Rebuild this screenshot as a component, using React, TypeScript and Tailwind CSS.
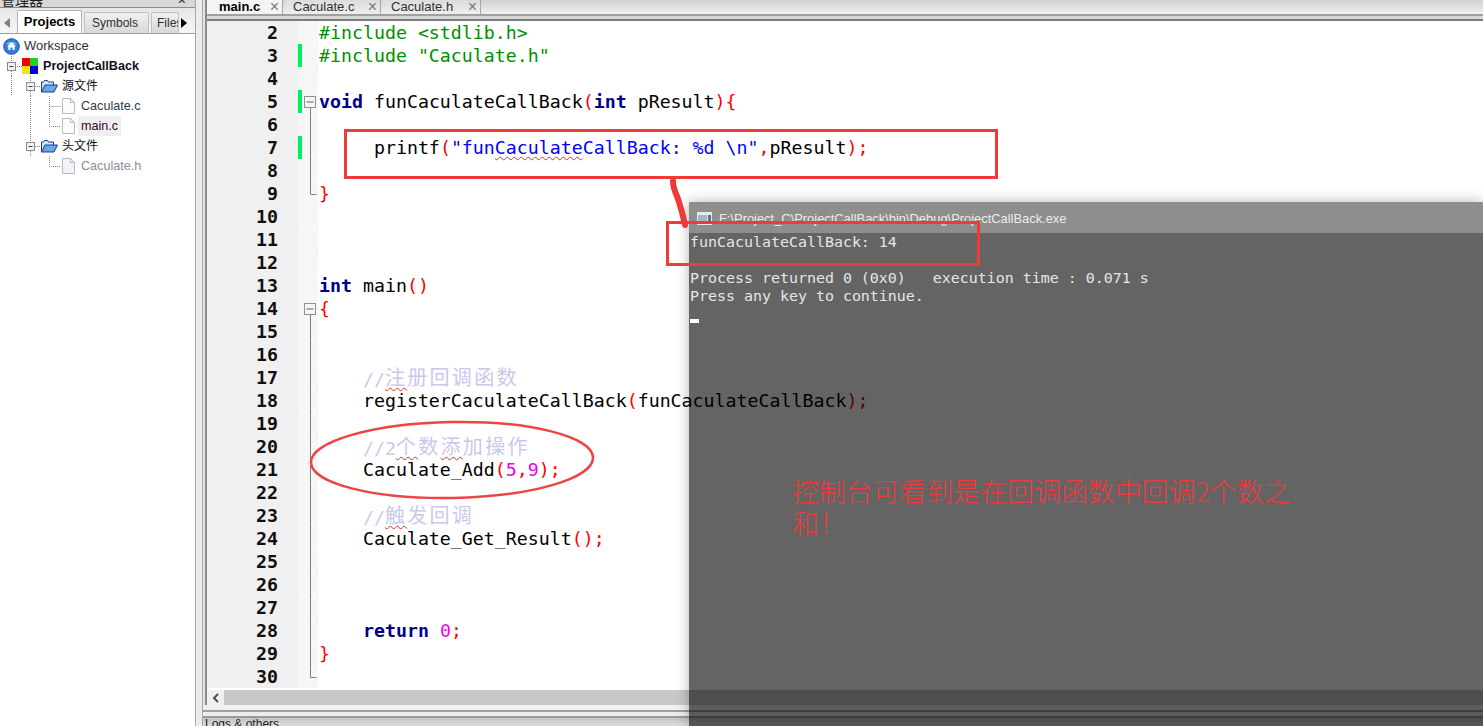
import type { ReactNode } from "react";

const mono = "font-['DejaVu_Sans_Mono','Liberation_Mono',monospace]";

function Op({ children }: { children: ReactNode }) {
  return <span className="text-[#ff0000]">{children}</span>;
}

function Kw({ children }: { children: ReactNode }) {
  return <span className="text-[#00008b] font-bold">{children}</span>;
}

function Num({ children }: { children: ReactNode }) {
  return <span className="text-[#f000f0]">{children}</span>;
}

function Squiggle({ children }: { children: ReactNode }) {
  return <span className="underline decoration-wavy decoration-[#e03030] decoration-1 underline-offset-2">{children}</span>;
}

// comments hold double width CJK, so the han text gets its own size and spacing
function Comment({ children }: { children: ReactNode }) {
  return <span className="text-[#c9c9ec]">{children}</span>;
}

function Han({ children }: { children: ReactNode }) {
  return <span className="relative -top-px font-['Noto_Sans_CJK_SC',sans-serif] text-[20px] tracking-[2.3px]">{children}</span>;
}

type Fold = "open" | "line" | "end" | null;

const code: { n: number; bar?: boolean; fold?: Fold; body?: ReactNode }[] = [
  { n: 2, body: <span className="text-[#009000]">{"#include <stdlib.h>"}</span> },
  { n: 3, bar: true, body: <span className="text-[#009000]">{'#include "Caculate.h"'}</span> },
  { n: 4 },
  { n: 5, bar: true, fold: "open", body: <><Kw>void</Kw> funCaculateCallBack<Op>(</Op><Kw>int</Kw> pResult<Op>{"){"}</Op></> },
  { n: 6, fold: "line" },
  {
    n: 7,
    bar: true,
    fold: "line",
    body: (
      <>
        {"     printf"}<Op>(</Op>
        <span className="text-[#0000ff]">{'"fun'}<Squiggle>Caculate</Squiggle>{'CallBack: %d \\n"'}</span>
        <Op>,</Op>pResult<Op>);</Op>
      </>
    ),
  },
  { n: 8, fold: "line" },
  { n: 9, fold: "end", body: <Op>{"}"}</Op> },
  { n: 10 },
  { n: 11 },
  { n: 12 },
  { n: 13, body: <><Kw>int</Kw> main<Op>()</Op></> },
  { n: 14, fold: "open", body: <Op>{"{"}</Op> },
  { n: 15, fold: "line" },
  { n: 16, fold: "line" },
  { n: 17, fold: "line", body: <>{"    "}<Comment>//<Han><Squiggle>注</Squiggle>册回调函数</Han></Comment></> },
  { n: 18, fold: "line", body: <>{"    registerCaculateCallBack"}<Op>(</Op>funCaculateCallBack<Op>);</Op></> },
  { n: 19, fold: "line" },
  { n: 20, fold: "line", body: <>{"    "}<Comment>//2<Han><Squiggle>个</Squiggle>数<Squiggle>添</Squiggle>加操作</Han></Comment></> },
  { n: 21, fold: "line", body: <>{"    Caculate_Add"}<Op>(</Op><Num>5</Num><Op>,</Op><Num>9</Num><Op>);</Op></> },
  { n: 22, fold: "line" },
  { n: 23, fold: "line", body: <>{"    "}<Comment>//<Han><Squiggle>触</Squiggle>发回调</Han></Comment></> },
  { n: 24, fold: "line", body: <>{"    Caculate_Get_Result"}<Op>();</Op></> },
  { n: 25, fold: "line" },
  { n: 26, fold: "line" },
  { n: 27, fold: "line" },
  { n: 28, fold: "line", body: <>{"    "}<Kw>return</Kw> <Num>0</Num><Op>;</Op></> },
  { n: 29, fold: "line", body: <Op>{"}"}</Op> },
  { n: 30, fold: "end" },
];

function FoldMark({ fold }: { fold?: Fold }) {
  if (!fold) return null;
  return (
    <svg width="20" height="23" className="block">
      {fold === "open" && (
        <>
          <rect x="6.5" y="6.5" width="11" height="11" fill="#f4f4f4" stroke="#909090" />
          <path d="M8.5 12h7" stroke="#606060" />
          <path d="M12.5 18v5" stroke="#808080" />
        </>
      )}
      {fold === "line" && <path d="M12.5 0v23" stroke="#808080" />}
      {fold === "end" && <path d="M12.5 0v12.5h6" fill="none" stroke="#808080" />}
    </svg>
  );
}

function Globe() {
  return (
    <svg width="17" height="17" viewBox="0 0 17 17" className="shrink-0">
      <circle cx="8.5" cy="8.5" r="7.8" fill="#2f7fd8" stroke="#1b4f9c" />
      <path d="M3 6a7 5 0 0 1 11 0z" fill="#8cc4f4" />
      <path d="M8.5 4 13 8.5h-1.4V12H9.6V9.5H7.4V12H5.4V8.5H4z" fill="#fff" />
    </svg>
  );
}

function ProjectIcon() {
  return (
    <svg width="16" height="16" viewBox="0 0 16 16" className="shrink-0">
      <rect x="0" y="0" width="8" height="8" fill="#f00000" />
      <rect x="8" y="0" width="8" height="8" fill="#20d020" />
      <rect x="0" y="8" width="8" height="8" fill="#f0e800" />
      <rect x="8" y="8" width="8" height="8" fill="#0000e0" />
    </svg>
  );
}

function FolderIcon() {
  return (
    <svg width="17" height="13" viewBox="0 0 17 13" className="shrink-0">
      <path d="M.5 12V2h2l1-1.5h3L7.5 2h5v3" fill="#cfe4fa" stroke="#16408c" />
      <path d="M.5 12 4 5h12.5L13 12z" fill="#6aa6ea" stroke="#16408c" />
    </svg>
  );
}

function FileIcon({ faded }: { faded?: boolean }) {
  return (
    <svg width="13" height="16" viewBox="0 0 13 16" className="shrink-0">
      <path d="M.5.5h8l4 4v11H.5z" fill={faded ? "#f2f2f8" : "#fbfbfd"} stroke="#b8bac8" />
      <path d="M8.5.5v4h4" fill="none" stroke="#b8bac8" />
    </svg>
  );
}

// dotted connector lines for one row of the project tree
function Guide({ w, children }: { w: number; children: ReactNode }) {
  return (
    <svg width={w} height="20" className="shrink-0" stroke="#808080" strokeDasharray="1 1" fill="none">
      {children}
    </svg>
  );
}

function Minus({ x }: { x: number }) {
  return (
    <g strokeDasharray="none">
      <rect x={x - 3.5} y="6.5" width="8" height="8" fill="#eef0f2" stroke="#8c8c8c" />
      <path d={`M${x - 1.5} 10.5h4`} stroke="#404040" />
    </g>
  );
}

function Tree() {
  return (
    <div className="pt-[2px] font-['Liberation_Sans','Noto_Sans_CJK_SC',sans-serif] text-[12.6px] text-[#10101c]">
      <div className="flex h-5 items-center pl-[3px] gap-[4px]">
        <Globe />
        <span className="text-[13px] text-[#303040]">Workspace</span>
      </div>
      <div className="flex h-5 items-center">
        <Guide w={22}>
          <path d="M11.5 0v6M15 10.5h7M11.5 15v5" />
          <Minus x={11} />
        </Guide>
        <ProjectIcon />
        <span className="ml-[5px] font-bold">ProjectCallBack</span>
      </div>
      <div className="flex h-5 items-center">
        <Guide w={41}>
          <path d="M11.5 0v20M30.5 0v6M35 10.5h6M30.5 15v5" />
          <Minus x={30} />
        </Guide>
        <FolderIcon />
        <span className="ml-1 text-[12px]">源文件</span>
      </div>
      <div className="flex h-5 items-center">
        <Guide w={62}>
          <path d="M30.5 0v20M49.5 0v20M49.5 10.5h11" />
        </Guide>
        <FileIcon />
        <span className="ml-[6px] text-[#303848]">Caculate.c</span>
      </div>
      <div className="flex h-5 items-center">
        <Guide w={62}>
          <path d="M30.5 0v20M49.5 0v10.5h11" />
        </Guide>
        <FileIcon />
        <span className="ml-[3px] bg-[#efefef] px-[3px] h-5 leading-5 text-[#400030]">main.c</span>
      </div>
      <div className="flex h-5 items-center">
        <Guide w={41}>
          <path d="M30.5 0v6M35 10.5h6M30.5 15v5" />
          <Minus x={30} />
        </Guide>
        <FolderIcon />
        <span className="ml-1 text-[12px]">头文件</span>
      </div>
      <div className="flex h-5 items-center">
        <Guide w={62}>
          <path d="M49.5 0v10.5h11" />
        </Guide>
        <FileIcon faded />
        <span className="ml-[6px] text-[#8a8e98]">Caculate.h</span>
      </div>
    </div>
  );
}

function Sidebar() {
  return (
    <div className="flex w-[195px] shrink-0 flex-col overflow-hidden bg-white font-['Liberation_Sans',sans-serif]">
      <div className="flex h-[8px] items-end justify-between overflow-hidden border-b border-[#8c8c8c] bg-[#d8d8d8] px-[1px] text-[14px] leading-[8px] text-[#202020]">
        <span className="font-['Noto_Sans_CJK_SC',sans-serif] -translate-y-[3px]">管理器</span>
        <span className="mr-[8px] -translate-y-[3px]">×</span>
      </div>
      <div className="flex h-[26px] items-end border-b border-[#a0a0a0] bg-gradient-to-b from-[#e6e6e6] to-[#f6f6f6] pl-[4px] text-[12px]">
        <span className="mb-[5px] mr-[7px] h-0 w-0 border-y-[5px] border-r-[6px] border-y-transparent border-r-[#808080]" />
        <div className="flex h-[23px] w-[65px] items-center justify-center rounded-t-[2px] border border-b-0 border-[#b4b4b4] bg-white text-[13px] font-bold text-black">Projects</div>
        <div className="ml-[2px] flex h-[21px] w-[65px] items-center justify-center rounded-t-[2px] border border-b-0 border-[#c0c0c0] bg-gradient-to-b from-[#f0f0f0] to-[#d8d8d8] pr-[3px] text-[#303030]">Symbols</div>
        <div className="ml-[2px] flex h-[21px] w-[28px] items-center overflow-hidden rounded-t-[2px] border border-b-0 border-[#c0c0c0] bg-gradient-to-b from-[#f0f0f0] to-[#d8d8d8] pl-[5px] text-[#303030]">Files</div>
        <span className="mb-[5px] ml-[2px] h-0 w-0 border-y-[5px] border-l-[6px] border-y-transparent border-l-black" />
      </div>
      <Tree />
    </div>
  );
}

function EditorTab({ label, active, w }: { label: string; active?: boolean; w: string }) {
  return (
    <div className={`flex h-[14px] items-center justify-between overflow-hidden border-r border-[#a8a8a8] pl-[8px] pr-[3px] text-[13px] leading-[12px] ${w} ${active ? "bg-[#f4f4f4] pl-[12px] font-bold text-black" : "bg-gradient-to-b from-[#dcdcdc] to-[#eeeeee] text-[#303030]"}`}>
      <span>{label}</span>
      <span className="font-normal text-[16px] leading-[12px] text-[#777]">×</span>
    </div>
  );
}

function Editor() {
  return (
    <div className="flex min-w-0 flex-1 flex-col border-l-2 border-[#8a8a8a]">
      <div className="flex h-[14px] shrink-0 bg-gradient-to-b from-[#d2d2d2] to-[#f0f0f0] font-['Liberation_Sans',sans-serif]">
        <EditorTab label="main.c" active w="w-[76px]" />
        <div className="w-[2px]" />
        <EditorTab label="Caculate.c" w="w-[96px]" />
        <div className="w-[2px]" />
        <EditorTab label="Caculate.h" w="w-[98px]" />
      </div>
      <div className="h-[2px] shrink-0 bg-[#a0a0a0]" />
      <div className="h-[3px] shrink-0 bg-[#d8d8d8]" />
      <div className="h-[2px] shrink-0 bg-[#7c7c7c]" />
      <div className="flex-1 overflow-hidden bg-white">
        {code.map((line) => (
          <div key={line.n} className={`flex h-[23px] text-[18.25px] leading-[23px] text-black ${mono}`}>
            <div className="w-[91px] shrink-0 bg-[#f0f0f0] pr-[20px] text-right font-bold text-[#101010]">{line.n}</div>
            <div className="relative h-[23px] w-[20px] shrink-0 bg-[repeating-conic-gradient(#efefef_0_25%,#ffffff_0_50%)] bg-[length:2px_2px]">
              {line.bar && <div className="absolute left-0 top-0 h-full w-[4px] bg-[#00ee60]" />}
              <FoldMark fold={line.fold} />
            </div>
            <div className="whitespace-pre pl-[1px]">{line.body}</div>
          </div>
        ))}
      </div>
      <div className="flex h-[15px] shrink-0 bg-[#c8c8c8]">
        <div className="flex w-[17px] items-center justify-center bg-[#f0f0f0] text-[#505050]">
          <svg width="8" height="10" viewBox="0 0 8 10" fill="none" stroke="#505050" strokeWidth="2">
            <path d="M6 1 2 5l4 4" />
          </svg>
        </div>
      </div>
    </div>
  );
}

function Console() {
  return (
    <div className="absolute bottom-0 left-[689px] right-0 top-[202px] flex flex-col shadow-[0_0_12px_rgba(0,0,0,0.3)]">
      <div className="flex h-[31px] shrink-0 items-center gap-[7px] bg-[#8f8e8c] pl-[8px] pt-[2px] font-['Liberation_Sans',sans-serif] text-[12.9px] text-[#ececec]">
        <svg width="15" height="13" viewBox="0 0 15 13">
          <rect width="15" height="13" fill="#e8e8e8" />
          <rect x="1" y="3" width="9" height="9" fill="#9fb8c8" />
          <rect x="11" y="3" width="3" height="9" fill="#707070" />
        </svg>
        <span>F:\Project_C\ProjectCallBack\bin\Debug\ProjectCallBack.exe</span>
      </div>
      <div className="flex-1 whitespace-pre bg-[rgba(0,0,0,0.607)] pl-px font-['DejaVu_Sans_Mono',monospace] text-[14.95px] leading-[18px] text-[#e6e6e6]">
        <div>funCaculateCallBack: 14</div>
        <div>{" "}</div>
        <div>Process returned 0 (0x0)   execution time : 0.071 s</div>
        <div>Press any key to continue.</div>
        <div className="relative h-[18px]">
          <div className="absolute bottom-0 left-0 h-[4px] w-[9px] bg-white" />
        </div>
      </div>
    </div>
  );
}

export default function App() {
  return (
    <div className="relative flex h-[726px] w-[1483px] overflow-hidden bg-white">
      <Sidebar />
      <div className="w-[8px] shrink-0 border-x border-[#a8a8a8] bg-[#ececec]" />
      <div className="flex min-w-0 flex-1 flex-col">
        <div className="flex min-h-0 flex-1 bg-[#e4e4e4] pl-[2px]">
          <Editor />
        </div>
        <div className="h-[7px] shrink-0 border-b-2 border-[#a0a0a0] bg-[#f0f0f0]" />
        <div className="h-[4px] shrink-0 bg-[#ececec]" />
        <div className="h-[10px] shrink-0 overflow-hidden border-t-2 border-[#9a9a9a] bg-gradient-to-b from-[#c4c4c4] to-[#dcdcdc] pl-[2px] font-['Liberation_Sans',sans-serif] text-[12px] leading-[12px] text-[#202020]">
          Logs &amp; others
        </div>
      </div>

      <Console />

      {/* hand drawn red marks on top of the screenshot */}
      <div className="pointer-events-none absolute left-[344px] top-[129px] h-[50px] w-[654px] border-[3px] border-[#f03a3a]" />
      <div className="pointer-events-none absolute left-[666px] top-[221px] h-[45px] w-[314px] border-[3px] border-[#f03a3a]" />
      <svg className="pointer-events-none absolute left-[300px] top-[170px]" width="400" height="340" fill="none">
        <path d="M373 11c0 8 3 12 5 18s4 11 7 26" stroke="#f03a3a" strokeWidth="6" strokeLinecap="round" />
        <ellipse cx="152" cy="290" rx="141" ry="38" transform="rotate(-1 152 290)" stroke="#ee4444" strokeWidth="2.5" />
      </svg>
      <div className="absolute left-[792px] top-[475px] w-[505px] font-['Noto_Sans_CJK_SC',serif] text-[26.9px] font-light leading-[32px] text-[#ee3a3a]">
        控制台可看到是在回调函数中回调2个数之和！
      </div>
    </div>
  );
}
